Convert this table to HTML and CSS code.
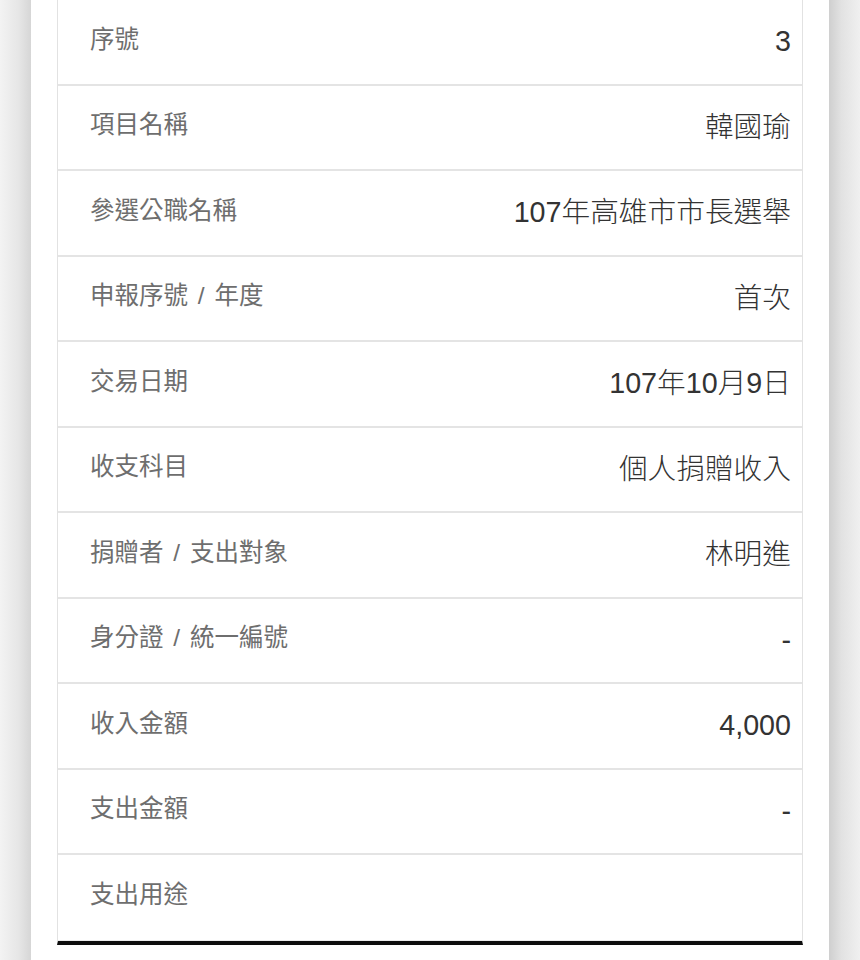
FILE: index.html
```html
<!DOCTYPE html>
<html lang="zh-Hant">
<head>
<meta charset="utf-8">
<title>政治獻金明細</title>
<link rel="stylesheet" href="styles.css">
</head>
<body>
<div class="edge edge-left"></div>
<main class="paper">
  <div class="table">
    <div class="row"><div class="label">序號</div><div class="value">3</div></div>
    <div class="row"><div class="label">項目名稱</div><div class="value">韓國瑜</div></div>
    <div class="row"><div class="label">參選公職名稱</div><div class="value">107年高雄市市長選舉</div></div>
    <div class="row"><div class="label">申報序號 / 年度</div><div class="value">首次</div></div>
    <div class="row"><div class="label">交易日期</div><div class="value">107年10月9日</div></div>
    <div class="row"><div class="label">收支科目</div><div class="value">個人捐贈收入</div></div>
    <div class="row"><div class="label">捐贈者 / 支出對象</div><div class="value">林明進</div></div>
    <div class="row"><div class="label">身分證 / 統一編號</div><div class="value">-</div></div>
    <div class="row"><div class="label">收入金額</div><div class="value">4,000</div></div>
    <div class="row"><div class="label">支出金額</div><div class="value">-</div></div>
    <div class="row last"><div class="label">支出用途</div><div class="value"></div></div>
  </div>
</main>
<div class="edge edge-right"></div>
</body>
</html>
```

FILE: styles.css
```css
html, body {
  margin: 0;
  padding: 0;
  height: 960px;
  overflow: hidden;
}
body {
  display: flex;
  background: #ffffff;
  font-family: "Noto Sans CJK TC", "Noto Sans", sans-serif;
}
.edge {
  width: 31px;
  flex: 0 0 31px;
  height: 960px;
}
.edge-left {
  background: linear-gradient(to right, #f3f3f3 0%, #e6e6e6 60%, #d6d6d6 100%);
}
.edge-right {
  background: linear-gradient(to right, #cfcfcf 0%, #e2e2e2 40%, #f0f0f0 100%);
}
.paper {
  flex: 0 0 798px;
  width: 798px;
  background: #ffffff;
  padding-left: 26px;
  box-sizing: border-box;
}
.table {
  width: 746px;
  margin-top: 0;
  border-left: 1px solid #e2e2e2;
  border-right: 1px solid #e2e2e2;
  box-sizing: border-box;
  border-bottom: 4px solid #0d0d0d;
}
.row {
  height: 85.5px;
  box-sizing: border-box;
  border-bottom: 2px solid #e4e4e4;
  display: flex;
  align-items: center;
  justify-content: space-between;
  padding: 0 11px 0 32px;
}
.row.last {
  border-bottom: 1px solid #ececec;
}
.label {
  font-family: "Liberation Sans", "Noto Sans CJK TC", sans-serif;
  font-size: 24.5px;
  color: #6e6e6e;
  padding-bottom: 4px;
  line-height: 1;
  word-spacing: 3px;
}
.value {
  font-family: "Liberation Sans", "Noto Sans CJK TC", sans-serif;
  font-size: 28.7px;
  font-weight: 300;
  color: #333333;
  line-height: 1;
}
```
